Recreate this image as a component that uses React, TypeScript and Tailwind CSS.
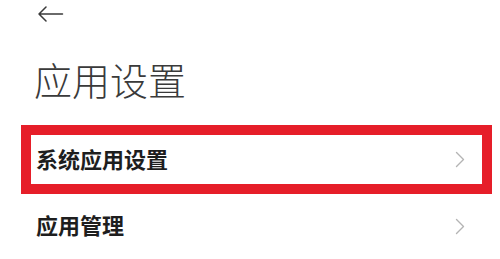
import React from "react";

const Chevron = () => (
  <svg width="10" height="17" viewBox="0 0 10 17" fill="none">
    <path d="M1.5 1.5 L8.5 8.5 L1.5 15.5" stroke="#b4b4b4" strokeWidth="1.4" strokeLinecap="round" strokeLinejoin="round" />
  </svg>
);

export default function App() {
  const cjk = { fontFamily: '"Noto Sans CJK SC", "Noto Sans", sans-serif' };
  return (
    <div className="w-[500px] h-[259px] bg-white overflow-hidden" style={cjk}>
      <div className="h-[26px] pt-[6px] pl-[37px]">
        <svg width="27" height="16" viewBox="0 0 27 16" fill="none">
          <path d="M25.5 8 H2 M9 1 L2 8 L9 15" stroke="#3a3a3a" strokeWidth="1.5" strokeLinecap="round" strokeLinejoin="round" />
        </svg>
      </div>
      <div className="h-[40px] mt-[33px] pl-[34px] flex items-center text-[38px] leading-[40px] font-light text-[#3a3a3a]">
        应用设置
      </div>
      <div className="h-[26px]" />
      <div className="ml-[21px] w-[471px] h-[69px] border-[10px] border-[#e61e29] flex items-center justify-between pl-[5px] pr-[17px]">
        <span className="text-[22px] leading-[26px] pb-[4px] font-bold text-[#1e1e1e]">系统应用设置</span>
        <Chevron />
      </div>
      <div className="ml-[21px] w-[471px] h-[64px] flex items-center justify-between pl-[15px] pr-[27px]">
        <span className="text-[22px] leading-[26px] pb-[4px] font-bold text-[#1e1e1e]">应用管理</span>
        <Chevron />
      </div>
    </div>
  );
}
